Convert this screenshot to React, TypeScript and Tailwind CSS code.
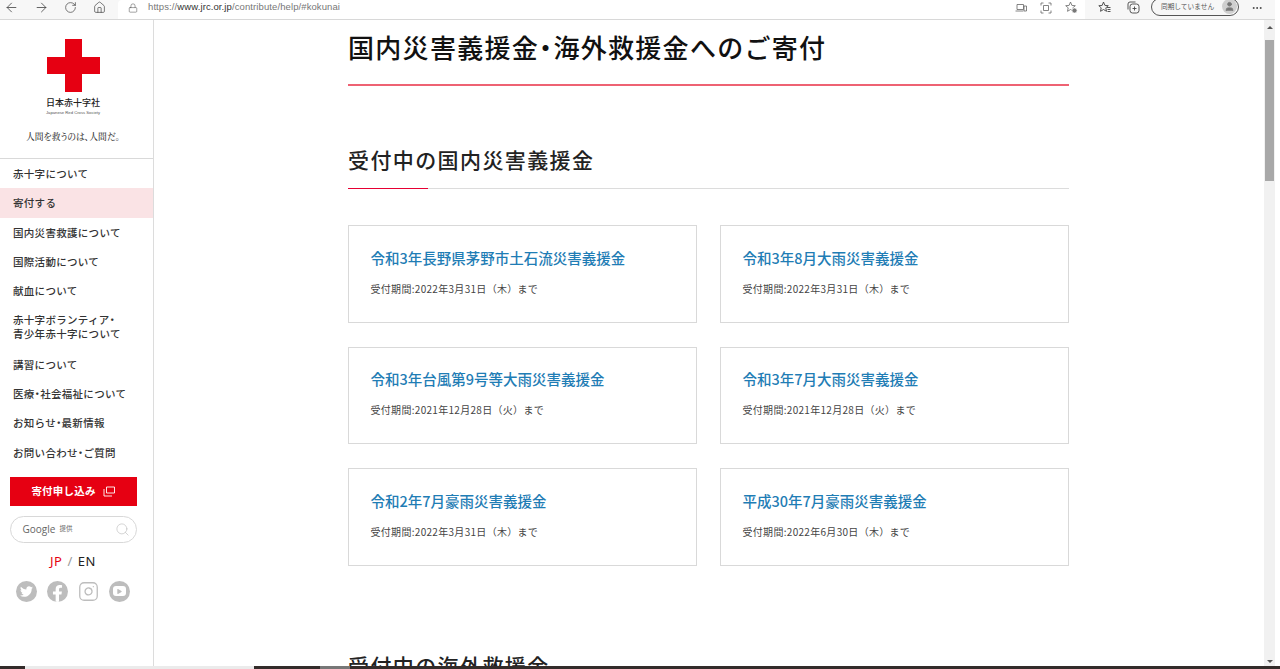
import React from 'react';
import { ArrowLeft, ArrowRight, RotateCw, Home, Lock, Search, MoreHorizontal, User, Instagram } from 'lucide-react';
import { FaTwitter, FaFacebookF, FaPlay } from 'react-icons/fa';

const jp = '[font-family:"Noto_Sans_CJK_JP","Noto_Sans",sans-serif]';

const navItems = [
  { label: '赤十字について' },
  { label: '寄付する', active: true },
  { label: '国内災害救護について' },
  { label: '国際活動について' },
  { label: '献血について' },
  { label: '赤十字ボランティア・\n青少年赤十字について', tall: true },
  { label: '講習について' },
  { label: '医療・社会福祉について' },
  { label: 'お知らせ・最新情報' },
  { label: 'お問い合わせ・ご質問' },
];

const cards = [
  { title: '令和3年長野県茅野市土石流災害義援金', term: '受付期間:2022年3月31日（木）まで' },
  { title: '令和3年8月大雨災害義援金', term: '受付期間:2022年3月31日（木）まで' },
  { title: '令和3年台風第9号等大雨災害義援金', term: '受付期間:2021年12月28日（火）まで' },
  { title: '令和3年7月大雨災害義援金', term: '受付期間:2021年12月28日（火）まで' },
  { title: '令和2年7月豪雨災害義援金', term: '受付期間:2022年3月31日（木）まで' },
  { title: '平成30年7月豪雨災害義援金', term: '受付期間:2022年6月30日（木）まで' },
];

// the site sets ・ tighter than a full em
const NarrowDot = ({ text }: { text: string }) => {
  const parts = text.split('・');
  return (
    <>
      {parts.map((p, i) => (
        <React.Fragment key={i}>
          {i > 0 && <span className="[font-feature-settings:'palt']">・</span>}
          {p}
        </React.Fragment>
      ))}
    </>
  );
};

const Toolbar = () => (
  <div className="h-[20px] shrink-0 flex bg-[#f7f7f7] border-b border-[#d8d8d8] text-[#444] overflow-hidden">
    <div className="w-[118px] h-[15px] flex items-center pl-[3.5px] gap-[15px] shrink-0">
      <ArrowLeft size={15} strokeWidth={1.3} />
      <ArrowRight size={15} strokeWidth={1.3} />
      <RotateCw size={13} strokeWidth={1.3} />
      <Home size={13} strokeWidth={1.3} className="ml-[1.5px]" />
    </div>
    <div className="w-[967px] h-[19px] bg-white rounded-tl-[4px] shrink-0">
      <div className="h-[15px] flex items-center pl-[10px]">
        <Lock size={10} strokeWidth={1.3} className="text-[#555]" />
        <span className="ml-[10px] text-[9.5px] tracking-[0.1px] text-[#777] font-['Liberation_Sans',sans-serif]">
          https://<span className="text-[#333]">www.jrc.or.jp</span>/contribute/help/#kokunai
        </span>
        <div className="ml-auto flex items-center gap-[13px] pr-[7px] text-[#666]">
          <svg width="12" height="12" viewBox="0 0 12 12" fill="none" stroke="currentColor" strokeWidth="0.8">
            <path d="M2 2.500h6.500v5H2zM0.500 9h8" />
            <path d="M9 4h2.500v5H9z" />
          </svg>
          <svg width="12" height="12" viewBox="0 0 12 12" fill="none" stroke="currentColor" strokeWidth="0.8">
            <path d="M1 3.500V1h2.500M8.500 1H11v2.500M11 8.500V11H8.500M3.500 11H1V8.500" />
            <path d="M3.500 3.500h5v5h-5z" />
          </svg>
          <svg width="13" height="13" viewBox="0 0 13 13" fill="none" stroke="currentColor" strokeWidth="0.8">
            <path d="M5.500 1l1.400 3.400 3.400.3-2.500 2.100.7 3.500-3-1.800-3 1.800.7-3.500L.7 4.700l3.400-.3z" />
            <circle cx="9.500" cy="9.500" r="2.600" fill="#777" stroke="white" />
          </svg>
        </div>
      </div>
    </div>
    <div className="h-[15px] flex items-center pl-[13px] grow">
      <svg width="13" height="13" viewBox="0 0 13 13" fill="none" stroke="currentColor" strokeWidth="0.9">
        <path d="M5.500 1l1.400 3.400 3.400.3-2.500 2.100.7 3.500-3-1.800-3 1.800.7-3.500L.8 4.700l3.400-.3z" />
        <path d="M9 6.500h3.500M9.500 8.500h3M9.500 10.500h3" />
      </svg>
      <svg className="ml-[16px]" width="13" height="13" viewBox="0 0 13 13" fill="none" stroke="currentColor" strokeWidth="0.9">
        <rect x="3" y="3" width="9" height="9" rx="2.500" />
        <path d="M1 8.500V3a2 2 0 0 1 2-2h5.500M7.500 5.500v4M5.500 7.500h4" />
      </svg>
      <div className={`${jp} ml-[11px] w-[88px] h-[18px] -mt-[2px] border border-[#555] rounded-full flex items-center pl-[9px] pr-[1px] justify-between text-[6.7px] text-[#555] whitespace-nowrap bg-[#f7f7f7]`}>
        同期していません
        <span className="w-[15px] h-[15px] rounded-full bg-[#cfcfcf] flex items-center justify-center">
          <User size={11} className="text-[#777]" fill="#777" />
        </span>
      </div>
      <MoreHorizontal size={12} className="ml-[12px]" />
    </div>
  </div>
);

const Sidebar = () => (
  <aside className={`${jp} w-[154px] shrink-0 border-r border-[#dcdcdc] bg-white flex flex-col`}>
    <div className="h-[139px] border-b border-[#d9d9d9] flex flex-col items-center pt-[19px] pr-[7px]">
      <svg width="53" height="53" viewBox="0 0 53 53">
        <path d="M18 0h17v18h18v17H35v18H18V35H0V18h18z" fill="#e60012" />
      </svg>
      <div className="mt-[4px] text-[9px] leading-[14px] font-medium text-[#222]">日本赤十字社</div>
      <div className="text-[4.2px] leading-[5px] text-[#555] font-['Liberation_Sans',sans-serif] whitespace-nowrap">Japanese Red Cross Society</div>
      <div className="mt-[15px] text-[8.800px] leading-[14px] font-medium text-[#333] whitespace-nowrap [font-feature-settings:'palt'] font-['Noto_Serif_CJK_JP','Noto_Sans_CJK_JP',serif]">人間を救うのは、人間だ。</div>
    </div>
    <nav>
      {navItems.map((item) => (
        <div
          key={item.label}
          className={`${item.tall ? 'h-[44px] leading-[14px]' : 'h-[29.3px] leading-[29px]'} ${item.active ? 'bg-[#fae3e5]' : ''} flex items-center pl-[13px] text-[10.5px] tracking-[0.3px] text-[#333] whitespace-pre-line font-medium`}
        >
          <span><NarrowDot text={item.label} /></span>
        </div>
      ))}
    </nav>
    <div className="mt-[10px] ml-[9.5px] w-[127px] h-[29px] bg-[#e60012] text-white text-[10.5px] font-bold tracking-[0.2px] flex items-center justify-center gap-[7px]">
      寄付申し込み
      <svg width="12" height="11" viewBox="0 0 12 11" fill="none" stroke="white" strokeWidth="0.9">
        <path d="M3.500 1h8v6h-8z" />
        <path d="M1 3v7h8" />
      </svg>
    </div>
    <div className="mt-[10px] ml-[9.5px] w-[127px] h-[27px] border border-[#d8d8d8] rounded-full flex items-center pl-[12px] pr-[6px]">
      <span className="text-[10px] text-[#666] font-['Open_Sans',sans-serif]">Google</span>
      <span className="ml-[4px] text-[6.5px] text-[#666]">提供</span>
      <Search size={15} strokeWidth={1} className="ml-auto text-[#bbb]" />
    </div>
    <div className="mt-[9px] pr-[7px] text-center text-[13px] leading-[18px] tracking-[0.5px] font-['Noto_Sans',sans-serif]">
      <span className="text-[#e60012]">JP</span>
      <span className="text-[#999] mx-[5px]">/</span>
      <span className="text-[#222]">EN</span>
    </div>
    <div className="mt-[11px] pl-[16px] flex gap-[10px] text-white">
      <span className="w-[21px] h-[21px] rounded-full bg-[#bdbdbd] flex items-center justify-center"><FaTwitter size={13} /></span>
      <span className="w-[21px] h-[21px] rounded-full bg-[#bdbdbd] flex items-end justify-center overflow-hidden"><FaFacebookF size={17} /></span>
      <span className="w-[21px] h-[21px] flex items-center justify-center text-[#bdbdbd]"><Instagram size={25} strokeWidth={1.5} /></span>
      <span className="w-[21px] h-[21px] rounded-full bg-[#bdbdbd] flex items-center justify-center">
        <span className="w-[13px] h-[10px] rounded-[3px] bg-white flex items-center justify-center text-[#bdbdbd]"><FaPlay size={5} /></span>
      </span>
    </div>
  </aside>
);

const Card = ({ title, term }: { title: string; term: string }) => (
  <div className="h-[97.5px] border border-[#d9d9d9] pl-[21.5px] pt-[19.5px]">
    <div className="text-[14.5px] leading-[24px] font-medium text-[#1f7db5]">{title}</div>
    <div className="mt-[11px] text-[10px] leading-[16px] tracking-[0.3px] text-[#444]">{term}</div>
  </div>
);

const Main = () => (
  <main className={`${jp} grow overflow-hidden bg-white pl-[194px]`}>
    <div className="w-[721px]">
      <h1 className="h-[66px] border-b-2 border-[#ee6273] pt-[7px] text-[26px] leading-[40px] tracking-[1.3px] font-medium text-[#111]">
        <NarrowDot text="国内災害義援金・海外救援金へのご寄付" />
      </h1>
      <div className="mt-[57px] relative h-[46px] border-b border-[#dcdcdc]">
        <h2 className="text-[21px] leading-[32px] tracking-[1.4px] font-medium text-[#222]">受付中の国内災害義援金</h2>
        <span className="absolute left-0 -bottom-px w-[80px] h-px bg-[#e60033]" />
      </div>
      <div className="mt-[36px] grid grid-cols-2 gap-x-[23px] gap-y-[24px]">
        {cards.map((c) => <Card key={c.title} title={c.title} term={c.term} />)}
      </div>
      <h2 className="mt-[81px] text-[21px] leading-[36px] tracking-[1.4px] font-medium text-[#222]">受付中の海外救援金</h2>
    </div>
  </main>
);

const Scrollbar = () => (
  <div className="w-[11px] shrink-0 bg-[#f1f1f1] flex flex-col items-center">
    <span className="mt-[6px] w-0 h-0 border-x-[3px] border-x-transparent border-b-[3px] border-b-[#555]" />
    <span className="mt-[11px] w-[9px] h-[141px] bg-[#a8a8a8]" />
    <span className="mt-auto mb-[6px] w-0 h-0 border-x-[3px] border-x-transparent border-t-[3px] border-t-[#555]" />
  </div>
);

export default function App() {
  return (
    <div className="relative w-[1280px] h-[669px] overflow-hidden bg-white flex flex-col">
      <div className="w-[1275px] flex flex-col grow min-h-0">
        <Toolbar />
        <div className="flex grow min-h-0">
          <Sidebar />
          <Main />
          <Scrollbar />
        </div>
      </div>
      <div className="absolute left-0 bottom-0 w-[1280px] h-[3px] flex">
        <span className="w-[25px] bg-[#332c2a]" />
        <span className="w-[229px] bg-[#ebebeb]" />
        <span className="w-[66px] bg-[#332c2a]" />
        <span className="w-[30px] bg-[#777]" />
        <span className="grow bg-[#332c2a]" />
      </div>
    </div>
  );
}
